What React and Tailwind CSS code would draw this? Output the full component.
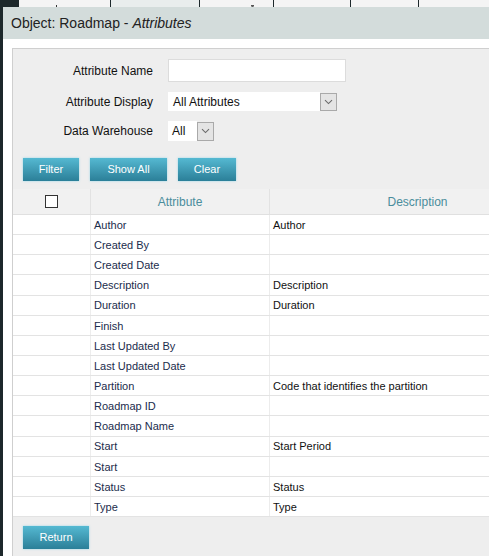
import React from "react";

const rows = [
  ["Author", "Author"],
  ["Created By", ""],
  ["Created Date", ""],
  ["Description", "Description"],
  ["Duration", "Duration"],
  ["Finish", ""],
  ["Last Updated By", ""],
  ["Last Updated Date", ""],
  ["Partition", "Code that identifies the partition"],
  ["Roadmap ID", ""],
  ["Roadmap Name", ""],
  ["Start", "Start Period"],
  ["Start", ""],
  ["Status", "Status"],
  ["Type", "Type"],
];

function Chevron() {
  return (
    <svg width="9" height="6" viewBox="0 0 9 6" className="block">
      <path d="M1 1.2 L4.5 4.6 L8 1.2" fill="none" stroke="#6b6b6b" strokeWidth="1.1" />
    </svg>
  );
}

function DropBtn({ h }) {
  return (
    <div className={`w-[17px] ${h} bg-[#e4e4e4] border border-[#a9a9a9] flex items-center justify-center`}>
      <Chevron />
    </div>
  );
}

function Btn({ children, w }) {
  return (
    <div
      className={`${w} h-[23px] flex items-center justify-center text-white text-[11px] bg-gradient-to-b from-[#55b9d2] to-[#2b7f98] shadow-[0_0_2px_rgba(90,200,230,0.6)]`}
    >
      {children}
    </div>
  );
}

export default function App() {
  return (
    <div
      className="w-[489px] h-[556px] overflow-hidden bg-[#1d282b] flex flex-col"
      style={{ fontFamily: '"Liberation Sans", Arial, sans-serif' }}
    >
      {/* top tabs strip */}
      <div className="h-[7px] flex pl-[19px] gap-[1px]">
        <div className="w-[91px] bg-[#f4f4f4] relative">
          <div className="absolute left-[37px] bottom-0 w-[1px] h-[2px] bg-[#333]" />
        </div>
        <div className="w-[88px] bg-[#e9eded]" />
        <div className="w-[73px] bg-[#f4f4f4] relative">
          <div className="absolute left-[51px] bottom-0 w-[3px] h-[2px] bg-[#555] rounded-b" />
        </div>
        <div className="w-[76px] bg-[#f4f4f4]" />
        <div className="w-[67px] bg-[#f4f4f4]" />
        <div className="flex-1 bg-[#f4f4f4]" />
      </div>

      <div className="ml-[3px] flex-1 bg-white flex flex-col">
        <div className="h-[32px] bg-[#d3dcdb] flex items-center pl-[8px] text-[14px] text-[#222]">
          <span>
            Object: Roadmap - <i>Attributes</i>
          </span>
        </div>

        <div className="flex-1 pt-[9px] pl-[9px] flex flex-col">
          <div className="flex-1 bg-[#eeeeee] border-l border-t border-[#cfcfcf] flex flex-col">
            {/* form */}
            <div className="pt-[10px] flex flex-col text-[12px] text-[#111]">
              <div className="flex items-center h-[23px]">
                <div className="w-[140px] text-right">Attribute Name</div>
                <div className="ml-[15px] w-[178px] h-[23px] bg-white border border-[#dcdcdc]" />
              </div>
              <div className="flex items-center h-[19px] mt-[10px]">
                <div className="w-[140px] text-right">Attribute Display</div>
                <div className="ml-[15px] flex items-center">
                  <div className="w-[152px] h-[19px] bg-white flex items-center pl-[5px]">All Attributes</div>
                  <DropBtn h="h-[18px]" />
                </div>
              </div>
              <div className="flex items-center h-[20px] mt-[10px]">
                <div className="w-[140px] text-right">Data Warehouse</div>
                <div className="ml-[15px] flex items-center">
                  <div className="w-[29px] h-[20px] bg-white flex items-center pl-[4px]">All</div>
                  <DropBtn h="h-[19px]" />
                </div>
              </div>
            </div>

            {/* buttons */}
            <div className="flex gap-[11px] pl-[10px] mt-[17px]">
              <Btn w="w-[56px]">Filter</Btn>
              <Btn w="w-[77px]">Show All</Btn>
              <Btn w="w-[58px]">Clear</Btn>
            </div>

            {/* table */}
            <div className="mt-[8px] text-[11px]">
              <div className="flex h-[26px] bg-[#f1f1f1] border-b border-[#e0e0e0] text-[12px] text-[#4a8d9c]">
                <div className="w-[78px] flex items-center justify-center border-r border-[#e2e2e2]">
                  <div className="w-[13px] h-[13px] bg-white border border-[#333]" />
                </div>
                <div className="w-[179px] flex items-center justify-center border-r border-[#e2e2e2]">Attribute</div>
                <div className="flex-1 flex items-center justify-center pl-[76px]">Description</div>
              </div>
              {rows.map(([a, d], i) => (
                <div key={i} className="flex h-[20.15px] bg-white border-b border-[#e3e3e3]">
                  <div className="w-[78px] border-r border-[#ededed]" />
                  <div className="w-[179px] pl-[3px] pt-[1px] flex items-center text-[#1b2c4c] border-r border-[#ececec]">{a}</div>
                  <div className="flex-1 pl-[3px] pt-[1px] flex items-center text-[#111]">{d}</div>
                </div>
              ))}
            </div>

            <div className="pl-[10px] mt-[9px]">
              <Btn w="w-[66px]">Return</Btn>
            </div>
          </div>
        </div>
      </div>
    </div>
  );
}
